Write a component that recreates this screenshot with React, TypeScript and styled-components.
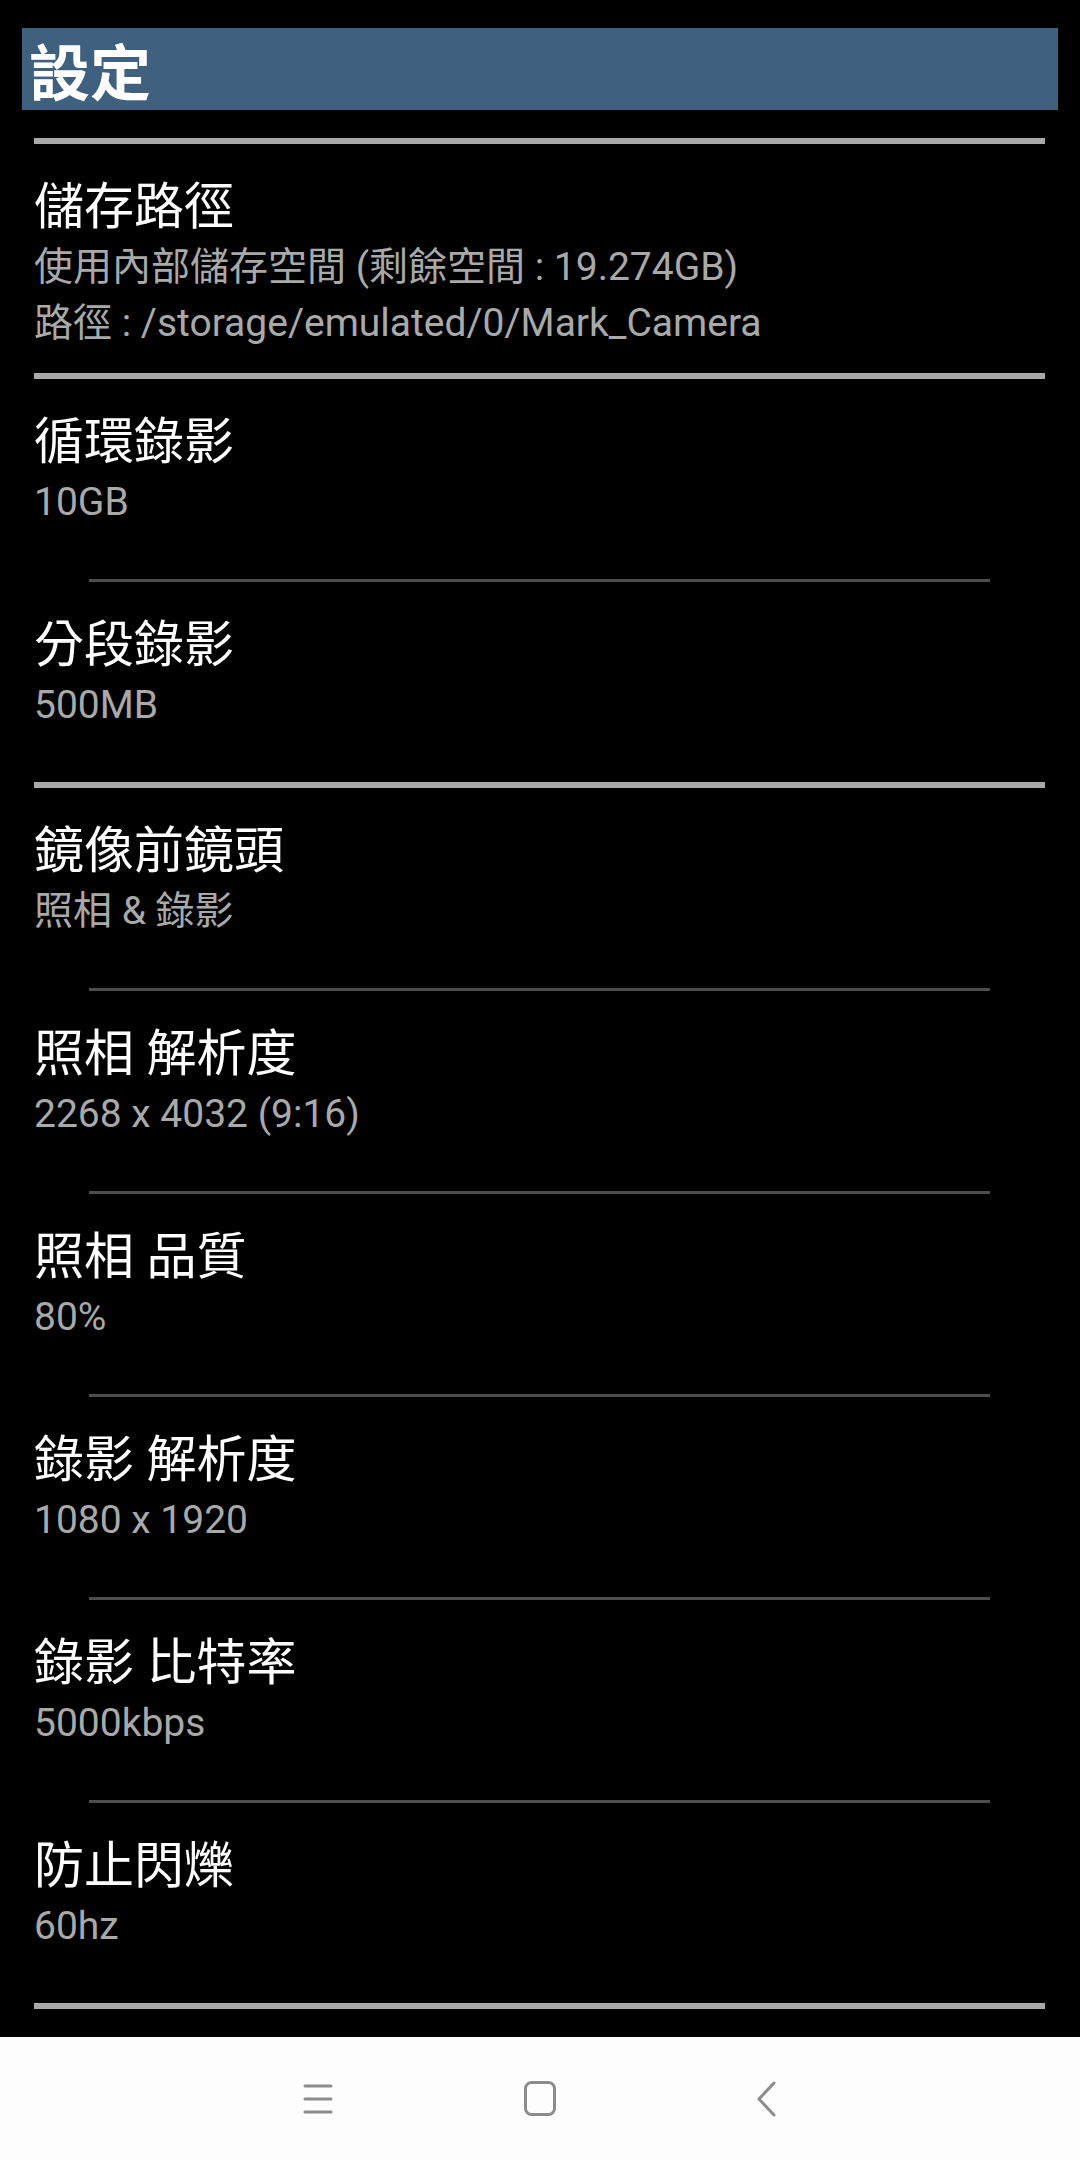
import React from 'react';
import styled, { createGlobalStyle } from 'styled-components';

const GlobalStyle = createGlobalStyle`
  html, body {
    margin: 0;
    padding: 0;
    background: #000;
  }
  body {
    font-family: Roboto, "Noto Sans CJK TC", "Noto Sans CJK SC", sans-serif;
  }
`;

const Screen = styled.div`
  width: 1080px;
  height: 2160px;
  display: flex;
  flex-direction: column;
  background: #000;
  overflow: hidden;
`;

const Header = styled.div`
  margin: 28px 22px 28px;
  height: 82px;
  display: flex;
  align-items: center;
  padding-left: 7px;
  background: #40607f;
  color: #fff;
  font-size: 61px;
  font-weight: 700;
`;

const Divider = styled.div<{ $thick?: boolean }>`
  flex-shrink: 0;
  height: ${(p) => (p.$thick ? '6px' : '3px')};
  margin: ${(p) => (p.$thick ? '0 35px 0 34px' : '0 90px 0 89px')};
  background: ${(p) => (p.$thick ? '#a9a9a9' : '#4d4d4d')};
`;

const Row = styled.div`
  box-sizing: border-box;
  min-height: 200px;
  padding: 31px 34px 22px;
`;

const Title = styled.div`
  color: #fff;
  font-size: 50px;
  line-height: 64px;
  white-space: nowrap;
`;

const Summary = styled.div`
  color: #a9a9a9;
  font-size: 39px;
  line-height: 56px;
  white-space: nowrap;
`;

const NavBar = styled.div`
  margin-top: auto;
  height: 123px;
  flex-shrink: 0;
  background: #fdfdfd;
  display: grid;
  grid-template-columns: repeat(3, 222px);
  justify-content: center;
  justify-items: center;
  align-items: center;
`;

const NavIcon = styled.svg`
  display: block;
  color: #8c8c8c;
`;

type Pref = { title: string; summary: string[] };

const groups: Pref[][] = [
  [
    {
      title: '儲存路徑',
      summary: [
        '使用內部儲存空間 (剩餘空間 : 19.274GB)',
        '路徑 : /storage/emulated/0/Mark_Camera',
      ],
    },
  ],
  [
    { title: '循環錄影', summary: ['10GB'] },
    { title: '分段錄影', summary: ['500MB'] },
  ],
  [
    { title: '鏡像前鏡頭', summary: ['照相 & 錄影'] },
    { title: '照相 解析度', summary: ['2268 x 4032 (9:16)'] },
    { title: '照相 品質', summary: ['80%'] },
    { title: '錄影 解析度', summary: ['1080 x 1920'] },
    { title: '錄影 比特率', summary: ['5000kbps'] },
    { title: '防止閃爍', summary: ['60hz'] },
  ],
];

function App() {
  return (
    <Screen>
      <GlobalStyle />
      <Header>設定</Header>
      {groups.map((group, gi) => (
        <React.Fragment key={gi}>
          <Divider $thick />
          {group.map((pref, i) => (
            <React.Fragment key={pref.title}>
              {i > 0 && <Divider />}
              <Row>
                <Title>{pref.title}</Title>
                {pref.summary.map((line) => (
                  <Summary key={line}>{line}</Summary>
                ))}
              </Row>
            </React.Fragment>
          ))}
        </React.Fragment>
      ))}
      <Divider $thick />
      <NavBar>
        <NavIcon width="30" height="34" viewBox="0 0 30 34">
          <g stroke="currentColor" strokeWidth="3" strokeLinecap="round">
            <line x1="2" y1="4" x2="28" y2="4" />
            <line x1="2" y1="17" x2="28" y2="17" />
            <line x1="2" y1="30" x2="28" y2="30" />
          </g>
        </NavIcon>
        <NavIcon width="32" height="35" viewBox="0 0 32 35">
          <rect x="1.5" y="1.5" width="29" height="32" rx="6" fill="none" stroke="currentColor" strokeWidth="3" />
        </NavIcon>
        <NavIcon width="30" height="36" viewBox="0 0 30 36">
          <polyline
            points="27,2 12,18 27,34"
            fill="none"
            stroke="currentColor"
            strokeWidth="3"
            strokeLinecap="round"
            strokeLinejoin="round"
          />
        </NavIcon>
      </NavBar>
    </Screen>
  );
}

export default App;
